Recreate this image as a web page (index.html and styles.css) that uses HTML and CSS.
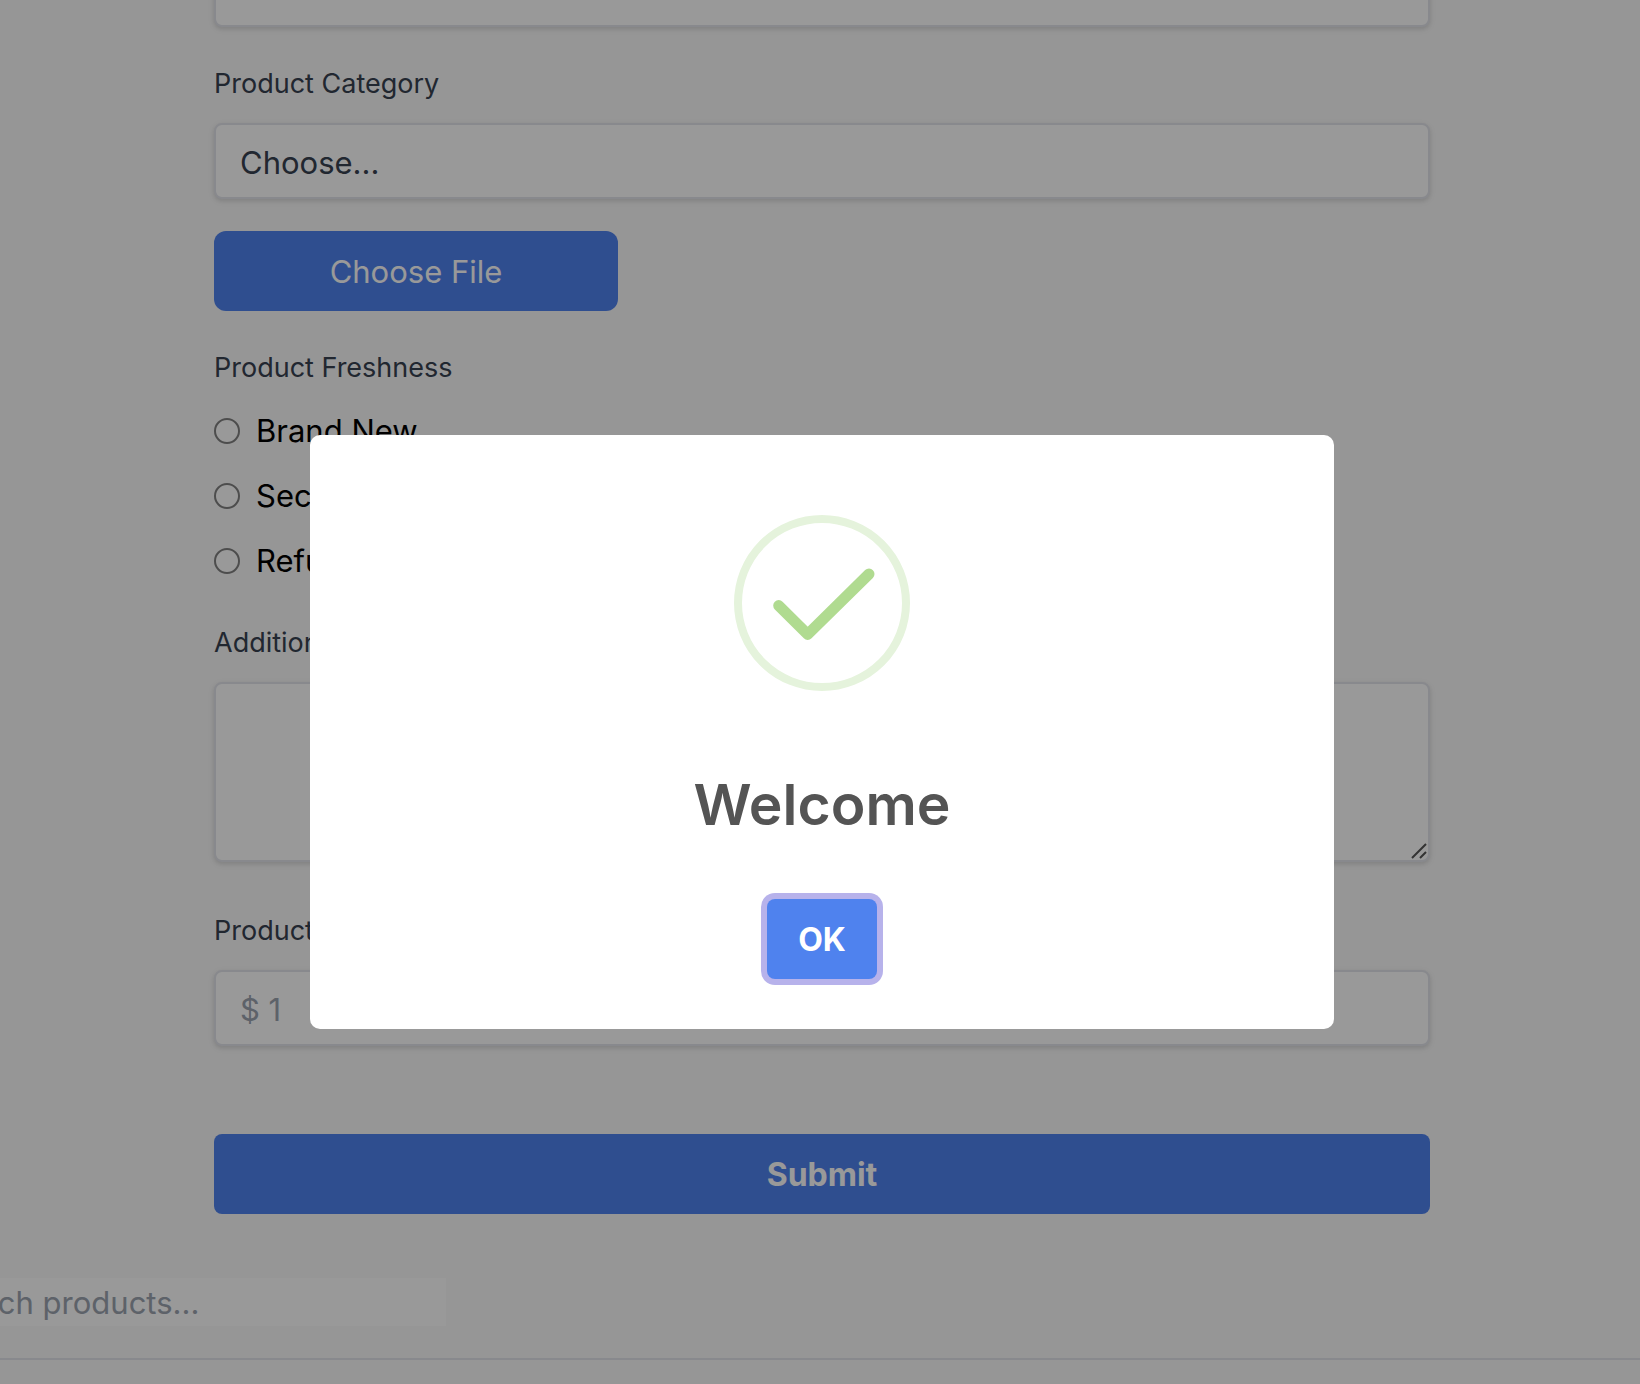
FILE: index.html
```html
<!DOCTYPE html>
<html lang="en">
<head>
<meta charset="utf-8">
<meta name="viewport" content="width=device-width, initial-scale=1">
<title>Add a product</title>
<link rel="stylesheet" href="styles.css">
</head>
<body>
<main class="page">
  <form class="form">
    <input class="control" type="text" aria-label="Product name">

    <div class="field">
      <label class="label" for="category">Product Category</label>
      <select class="control" id="category"><option>Choose...</option></select>
    </div>

    <button class="file-button" type="button">Choose File</button>

    <fieldset class="group">
      <legend class="label">Product Freshness</legend>
      <div class="options">
        <label class="option"><input class="radio" type="radio" name="freshness">Brand New</label>
        <label class="option"><input class="radio" type="radio" name="freshness">Second Hand</label>
        <label class="option"><input class="radio" type="radio" name="freshness">Refurbished</label>
      </div>
    </fieldset>

    <div class="field">
      <label class="label" for="details">Additional Details</label>
      <div class="area">
        <textarea class="control control-area" id="details"></textarea>
        <svg class="grip" viewBox="0 0 16 16" aria-hidden="true"><path d="M1 15 15 1M9 15l6-6"/></svg>
      </div>
    </div>

    <div class="field field-price">
      <label class="label" for="price">Product Price</label>
      <input class="control" id="price" type="text" placeholder="$ 1">
    </div>

    <button class="submit" type="submit">Submit</button>
  </form>
</main>

<div class="search-bar">
  <input class="search" type="search" placeholder="Search products..." aria-label="Search products">
</div>

<div class="overlay">
  <div class="modal" role="dialog" aria-modal="true" aria-labelledby="modal-title">
    <svg class="success" viewBox="0 0 176 176" aria-hidden="true">
      <circle class="success-ring" cx="88" cy="88" r="84"/>
      <path class="success-tick" d="M44.7 90.6 73.7 119.4 135 59"/>
    </svg>
    <h2 class="modal-title" id="modal-title">Welcome</h2>
    <button class="ok" type="button">OK</button>
  </div>
</div>
</body>
</html>
```
FILE: styles.css
```css
*, *::before, *::after { box-sizing: border-box; }

body {
  margin: 0;
  background: #fafafa;
  color: #000;
  font-family: Inter, "Liberation Sans", sans-serif;
  font-size: 31px;
  line-height: 48px;
}

button, input, select, textarea { font: inherit; margin: 0; }

.page { padding: 0 64px 0 68px; }

.form {
  display: flex;
  flex-direction: column;
  max-width: 1216px;
  margin: -49px auto 0;
}

.field, .group { margin-top: 37px; }
.field-price { margin-top: 49px; }

.label {
  display: block;
  margin-bottom: 19px;
  padding: 0;
  color: #374151;
  font-size: 27px;
  line-height: 40px;
}

.control {
  display: block;
  width: 100%;
  height: 76px;
  padding: 18px 24px 16px;
  appearance: none;
  border: 2px solid #e3e4eb;
  border-radius: 8px;
  background: #fff;
  box-shadow: 0 2px 6px rgba(0, 0, 0, 0.1), 0 2px 4px rgba(0, 0, 0, 0.06);
  color: #374151;
  line-height: 40px;
}

.control::placeholder, .search::placeholder { color: #9ca3af; opacity: 1; }

.area { position: relative; }
.control-area { height: 180px; resize: none; }

.grip {
  position: absolute;
  right: 3px;
  bottom: 3px;
  width: 16px;
  height: 16px;
  fill: none;
  stroke: #555;
  stroke-width: 2;
}

.file-button, .submit, .ok {
  height: 80px;
  padding: 2px 0 0;
  border: 0;
  background: #4f82ee;
  color: #fff;
}

.file-button {
  width: 404px;
  margin-top: 32px;
  border-radius: 12px;
}

.submit, .ok {
  border-radius: 8px;
  font-size: 32px;
  font-weight: 700;
}

.submit { margin-top: 88px; }

.group { min-width: 0; margin-inline: 0; margin-bottom: 1px; padding: 0; border: 0; }

.options { display: flex; flex-direction: column; gap: 17px; }

.option { display: flex; align-items: center; gap: 16px; }

.radio {
  width: 26px;
  height: 26px;
  appearance: none;
  border: 2px solid #808080;
  border-radius: 50%;
  background: #fff;
}

.search-bar {
  padding: 64px 0 32px;
  border-bottom: 2px solid #e3e4eb;
}

.search {
  display: block;
  width: 515px;
  height: 48px;
  margin-left: -69px;
  padding: 2px 0 0;
  appearance: none;
  border: 0;
  background: #fff;
}

.overlay {
  position: fixed;
  inset: 0;
  display: flex;
  align-items: center;
  justify-content: center;
  padding: 80px 0 0 4px;
  background: rgba(0, 0, 0, 0.4);
}

.modal {
  display: flex;
  flex-direction: column;
  align-items: center;
  width: 1024px;
  max-width: 100%;
  padding: 80px 40px 50px;
  border-radius: 10px;
  background: #fff;
}

.success { width: 176px; height: 176px; fill: none; }
.success-ring { stroke: #e5f3dc; stroke-width: 8; }
.success-tick {
  stroke: #b0db90;
  stroke-width: 11;
  stroke-linecap: round;
  stroke-linejoin: round;
}

.modal-title {
  margin: 78px 0 58px;
  color: #545454;
  font-size: 57px;
  font-weight: 600;
  line-height: 72px;
}

.ok {
  width: 110px;
  box-shadow: 0 0 0 6px #b7b2eb;
}
```
